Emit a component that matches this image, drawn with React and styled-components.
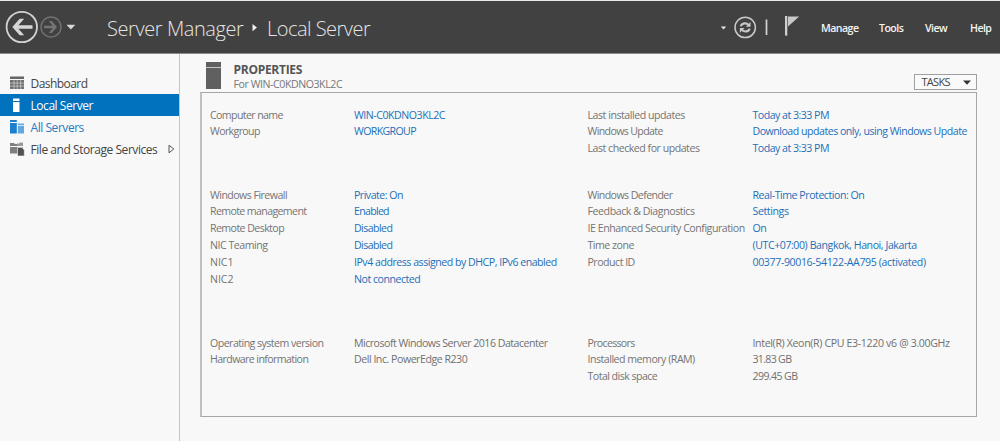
import React from "react";
import styled, { createGlobalStyle } from "styled-components";

const GlobalStyle = createGlobalStyle`
  * {
    box-sizing: border-box;
  }
  body {
    margin: 0;
    background: #f8f8f8;
    font-family: "Open Sans", "Noto Sans", sans-serif;
    overflow: hidden;
  }
`;

const Page = styled.div`
  display: flex;
  flex-direction: column;
  width: 1000px;
  height: 441px;
  border-top: 1px solid #e6ebea;
`;

const Header = styled.header`
  display: flex;
  align-items: center;
  height: 53px;
  padding-left: 5px;
  background: #414141;
  border-bottom: 1px solid #8a8a8a;
`;

const Title = styled.h1`
  display: flex;
  align-items: center;
  margin: 3px 0 0 30px;
  color: #e4e4e4;
  font-size: 20px;
  font-weight: 300;
  line-height: 28px;
  white-space: nowrap;
`;

const Crumb = styled.span`
  width: ${(props) => props.$width}px;
  letter-spacing: ${(props) => props.$spacing}px;
`;

const HeaderTools = styled.div`
  display: flex;
  align-items: center;
  margin-left: auto;
`;

const Menu = styled.nav`
  display: flex;
  width: 179px;
  margin-top: 2px;
  color: #f4f4f4;
  font-size: 10.6px;
  font-weight: 600;
  line-height: 16px;
`;

const MenuItem = styled.span`
  width: ${(props) => props.$width}px;
  letter-spacing: -0.55px;
`;

const Body = styled.div`
  display: flex;
  flex: 1;
`;

const Sidebar = styled.aside`
  width: 180px;
  padding-top: 18px;
  border-right: 1px solid #c4c4c4;
`;

const NavItem = styled.div`
  display: flex;
  align-items: center;
  height: 22px;
  padding: 0 4px 0 10px;
  color: ${(props) => props.$color || "#444444"};
  background: ${(props) => (props.$active ? "#0072be" : "transparent")};
  font-size: 12px;
  letter-spacing: ${(props) => props.$spacing || -0.45}px;
  white-space: nowrap;

  svg {
    flex: none;
  }
`;

const NavLabel = styled.span`
  flex: 1;
  margin-left: 5.5px;
`;

const Main = styled.main`
  flex: 1;
  padding: 7px 23px 0 20px;
`;

const PanelHeader = styled.div`
  display: flex;
  height: 31px;
  padding-left: 6px;
`;

const PanelTitle = styled.div`
  margin: 1px 0 0 12.5px;
`;

const Heading = styled.h2`
  margin: 0;
  color: #555555;
  font-size: 12px;
  font-weight: 700;
  line-height: 15px;
  letter-spacing: -0.28px;
`;

const SubHeading = styled.div`
  color: #777777;
  font-size: 10.6px;
  line-height: 14px;
  letter-spacing: -0.44px;
`;

const TasksButton = styled.button`
  display: flex;
  flex: none;
  align-items: center;
  justify-content: space-between;
  width: 63px;
  height: 16px;
  margin: 13px 0 0 auto;
  padding: 0 5px 0 6.5px;
  border: 1px solid #a0a0a0;
  background: #fafafa;
  color: #444444;
  font-family: inherit;
  font-size: 11px;
  line-height: 14px;
  letter-spacing: -0.7px;
`;

const Panel = styled.section`
  height: 325px;
  padding: 13.5px 0 0 8px;
  border: 1px solid #a6a6a6;
  border-left: 2px solid #c0c0c0;
`;

const Group = styled.div`
  display: flex;
  height: ${(props) => props.$height}px;
`;

const Column = styled.dl`
  display: grid;
  grid-template-columns: ${(props) => props.$labelWidth}px 1fr;
  grid-auto-rows: 16.9px;
  align-content: start;
  width: ${(props) => props.$width}px;
  margin: 0;
  font-size: 10.6px;
  line-height: 16.9px;
  white-space: nowrap;
`;

const Label = styled.dt`
  color: #747474;
  letter-spacing: ${(props) => props.$spacing}px;
`;

const Value = styled.dd`
  margin: 0;
  color: ${(props) => (props.$link ? "#1d6fb8" : "#707070")};
  letter-spacing: ${(props) => props.$spacing}px;
`;

// [label, value, label spacing, value spacing]
const groups = [
  {
    height: 80,
    link: true,
    left: [
      ["Computer name", "WIN-C0KDNO3KL2C", -0.61, -0.47],
      ["Workgroup", "WORKGROUP", -0.63, -0.64],
    ],
    right: [
      ["Last installed updates", "Today at 3:33 PM", -0.46, -0.51],
      ["Windows Update", "Download updates only, using Windows Update", -0.63, -0.49],
      ["Last checked for updates", "Today at 3:33 PM", -0.48, -0.51],
    ],
  },
  {
    height: 148,
    link: true,
    left: [
      ["Windows Firewall", "Private: On", -0.54, -0.51],
      ["Remote management", "Enabled", -0.62, -0.71],
      ["Remote Desktop", "Disabled", -0.57, -0.57],
      ["NIC Teaming", "Disabled", -0.48, -0.57],
      ["NIC1", "IPv4 address assigned by DHCP, IPv6 enabled", -0.05, -0.48],
      ["NIC2", "Not connected", -0.05, -0.48],
    ],
    right: [
      ["Windows Defender", "Real-Time Protection: On", -0.58, -0.46],
      ["Feedback & Diagnostics", "Settings", -0.43, -0.4],
      ["IE Enhanced Security Configuration", "On", -0.46, -0.6],
      ["Time zone", "(UTC+07:00) Bangkok, Hanoi, Jakarta", -0.49, -0.43],
      ["Product ID", "00377-90016-54122-AA795 (activated)", -0.5, -0.38],
    ],
  },
  {
    height: 70,
    link: false,
    left: [
      ["Operating system version", "Microsoft Windows Server 2016 Datacenter", -0.53, -0.5],
      ["Hardware information", "Dell Inc. PowerEdge R230", -0.59, -0.47],
    ],
    right: [
      ["Processors", "Intel(R) Xeon(R) CPU E3-1220 v6 @ 3.00GHz", -0.69, -0.35],
      ["Installed memory (RAM)", "31.83 GB", -0.49, -0.69],
      ["Total disk space", "299.45 GB", -0.53, -0.6],
    ],
  },
];

const HistoryIcon = () => (
  <svg width="72" height="36" viewBox="0 0 72 36" fill="none">
    <circle cx="16.8" cy="18" r="15.2" stroke="#d2d2d2" strokeWidth="1.8" />
    <path d="M27.5 18H9.5M18.5 9.8H15.2L8 18L15.2 26H18.5" stroke="none" />
    <path d="M14.7 9.8H19.2L13.4 16.3H27.5V19.7H13.4L19.2 26.2H14.7L7.3 18Z" fill="#d6d6d6" />
    <circle cx="46" cy="18" r="10" stroke="#707070" strokeWidth="1.5" />
    <path d="M46.8 12H43.7L47.7 16.8H39V19.2H47.7L43.7 24H46.8L52 18Z" fill="#747474" />
    <path d="M61.5 15.8H70.3L65.9 20.6Z" fill="#d8d8d8" />
  </svg>
);

const CrumbArrow = () => (
  <svg width="24" height="10" viewBox="0 0 24 10">
    <path d="M9.5 0L14 3.6L9.5 7.2Z" fill="#eeeeee" />
  </svg>
);

const StatusIcons = () => (
  <svg width="102" height="34" viewBox="0 0 102 34" fill="none">
    <path d="M1.8 16.4H7.2L4.5 19.6Z" fill="#e4e4e4" />
    <circle cx="26.2" cy="17.4" r="10.2" stroke="#c8c8c8" strokeWidth="1.5" />
    <path d="M21.8 16.2C22.7 13 27.4 12.3 29.7 15.1M30.6 18.6C29.7 21.8 25 22.5 22.7 19.7" stroke="#c8c8c8" strokeWidth="2.1" />
    <path d="M31.5 12V16.8H26.8ZM20.9 22.8V18H25.6Z" fill="#c8c8c8" />
    <path d="M47.5 9.5V25" stroke="#d4d4d4" strokeWidth="1.7" />
    <path d="M66 6H68.3V25.6H66Z" fill="#d0d0d0" />
    <path d="M69 6.6H80.2L69 16.5Z" fill="#c8c8c8" />
  </svg>
);

const DashboardIcon = () => (
  <svg width="15" height="14" viewBox="0 0 15 14">
    <path d="M0 0.5H14V3H0Z" fill="#666666" />
    <path d="M0 4H14V13H0Z" fill="#707070" />
    <path d="M0 7.1H14M0 10.1H14M4 4V13M7.2 4V13M10.6 4V13" stroke="#d4d4d4" strokeWidth="0.7" />
  </svg>
);

const ServerIcon = () => (
  <svg width="15" height="16" viewBox="0 0 15 16" fill="#ffffff">
    <path d="M3 1.5H9.5V4H3ZM3 5H9.5V15H3Z" />
  </svg>
);

const AllServersIcon = () => (
  <svg width="15" height="14" viewBox="0 0 15 14">
    <path d="M0 0H6.8V2H0ZM0 3H6.8V13.5H0Z" fill="#1c7fce" />
    <path d="M7.8 3.5H14V5.2H7.8ZM7.8 6H14V13.5H7.8Z" fill="#63a9df" />
  </svg>
);

const StorageIcon = () => (
  <svg width="15" height="14" viewBox="0 0 15 14">
    <path d="M0 1H4L5 2H7V4H0ZM0 5H7V11.5H0Z" fill="#808080" />
    <path d="M7 1.5H9L10 .5H13V4H7ZM7 5H13V11H7Z" fill="#999999" />
    <path d="M7.5 5.5H12L14.3 8V14H7.5Z" fill="#505050" stroke="#f8f8f8" strokeWidth="0.6" />
  </svg>
);

const ExpandArrow = () => (
  <svg width="7" height="10" viewBox="0 0 7 10">
    <path d="M1 1.2L5.8 5L1 8.8Z" fill="none" stroke="#555555" strokeWidth="1" />
  </svg>
);

const PropertiesIcon = () => (
  <svg width="15" height="28" viewBox="0 0 15 28">
    <path d="M0 1H15V28H0Z" fill="#606060" />
    <path d="M0 6.5H15" stroke="#c4c4c4" />
  </svg>
);

const DropArrow = () => (
  <svg width="8" height="5" viewBox="0 0 8 5">
    <path d="M0 0.5H8L4 4.8Z" fill="#333333" />
  </svg>
);

const PropertyColumn = ({ rows, link, labelWidth, width }) => (
  <Column $labelWidth={labelWidth} $width={width}>
    {rows.map(([label, value, labelSpacing, valueSpacing]) => (
      <React.Fragment key={label}>
        <Label $spacing={labelSpacing}>{label}</Label>
        <Value $link={link} $spacing={valueSpacing}>
          {value}
        </Value>
      </React.Fragment>
    ))}
  </Column>
);

const App = () => {
  return (
    <>
      <GlobalStyle />
      <Page>
        <Header>
          <HistoryIcon />
          <Title>
            <Crumb $width={136} $spacing={-0.42}>Server Manager</Crumb>
            <CrumbArrow />
            <Crumb $width={104} $spacing={-0.52}>Local Server</Crumb>
          </Title>
          <HeaderTools>
            <StatusIcons />
            <Menu>
              <MenuItem $width={58}>Manage</MenuItem>
              <MenuItem $width={46}>Tools</MenuItem>
              <MenuItem $width={45}>View</MenuItem>
              <MenuItem $width={30}>Help</MenuItem>
            </Menu>
          </HeaderTools>
        </Header>
        <Body>
          <Sidebar>
            <NavItem $spacing={-0.55}>
              <DashboardIcon />
              <NavLabel>Dashboard</NavLabel>
            </NavItem>
            <NavItem $active $color="#ffffff">
              <ServerIcon />
              <NavLabel>Local Server</NavLabel>
            </NavItem>
            <NavItem $color="#2a7ac0">
              <AllServersIcon />
              <NavLabel>All Servers</NavLabel>
            </NavItem>
            <NavItem>
              <StorageIcon />
              <NavLabel>File and Storage Services</NavLabel>
              <ExpandArrow />
            </NavItem>
          </Sidebar>
          <Main>
            <PanelHeader>
              <PropertiesIcon />
              <PanelTitle>
                <Heading>PROPERTIES</Heading>
                <SubHeading>For WIN-C0KDNO3KL2C</SubHeading>
              </PanelTitle>
              <TasksButton>
                TASKS
                <DropArrow />
              </TasksButton>
            </PanelHeader>
            <Panel>
              {groups.map((group) => (
                <Group key={group.height} $height={group.height}>
                  <PropertyColumn rows={group.left} link={group.link} labelWidth={144} width={377.5} />
                  <PropertyColumn rows={group.right} link={group.link} labelWidth={165} width={385} />
                </Group>
              ))}
            </Panel>
          </Main>
        </Body>
      </Page>
    </>
  );
};

export default App;
